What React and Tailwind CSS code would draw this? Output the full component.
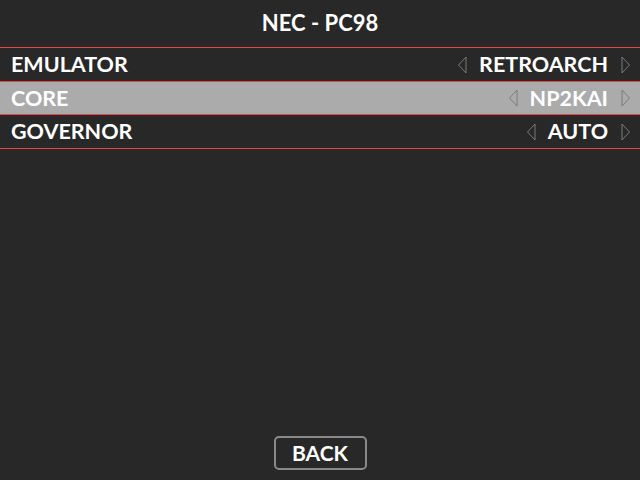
import React from 'react';

const rows = [
  { label: 'EMULATOR', value: 'RETROARCH', h: 'h-[34px]' },
  { label: 'CORE', value: 'NP2KAI', h: 'h-[33px]', selected: true },
  { label: 'GOVERNOR', value: 'AUTO', h: 'h-[34px]' },
];

const Arrow = ({ dir }) => (
  <svg width="10" height="18" viewBox="0 0 10 18" className="shrink-0">
    {dir === 'left' ? (
      <path d="M9 1 L1.5 9 L9 17 Z" fill="none" stroke="#7a7a7a" strokeWidth="1" />
    ) : (
      <path d="M1 1 L8.5 9 L1 17 Z" fill="none" stroke="#7a7a7a" strokeWidth="1" />
    )}
  </svg>
);

const App = () => {
  return (
    <div className="w-[640px] h-[480px] bg-[#282828] flex flex-col text-white font-['Lato','Open_Sans',sans-serif] font-bold">
      {/* Title */}
      <div className="h-[48px] flex items-center justify-center border-b border-[#e84545] text-[22px] pb-[2px]">
        NEC - PC98
      </div>

      {/* Options */}
      {rows.map((row) => (
        <div
          key={row.label}
          className={`${row.h} ${row.selected ? 'bg-[#ababab]' : ''} flex items-center justify-between pl-[11px] pr-[9px] border-b border-[#e84545] text-[21.5px]`}
        >
          <span>{row.label}</span>
          <div className="flex items-center">
            <Arrow dir="left" />
            <span className="ml-[12px] mr-[13px]">{row.value}</span>
            <Arrow dir="right" />
          </div>
        </div>
      ))}

      <div className="flex-1" />

      {/* Back button */}
      <div className="flex justify-center pb-[10px]">
        <div className="w-[93px] h-[34px] border-2 border-[#8a8a8a] rounded-[5px] flex items-center justify-center text-[21px]">
          BACK
        </div>
      </div>
    </div>
  );
};

export default App;
